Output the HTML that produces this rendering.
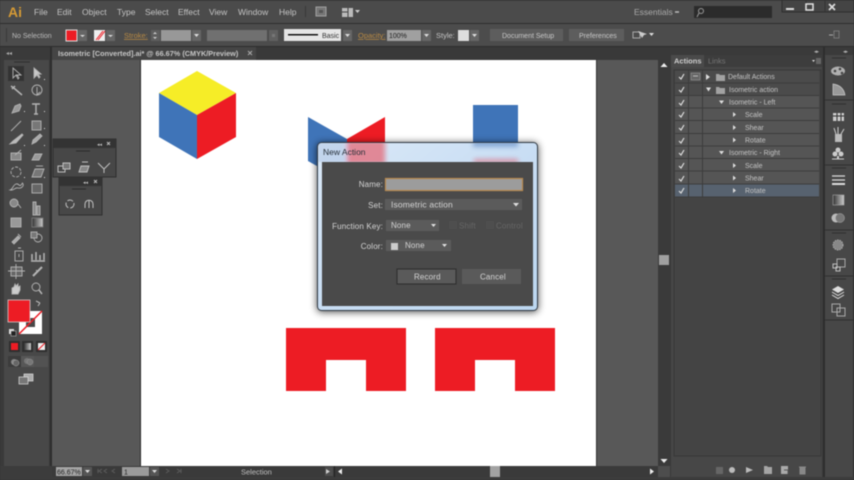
<!DOCTYPE html>
<html><head><meta charset="utf-8"><style>
html,body{margin:0;padding:0;width:854px;height:480px;overflow:hidden;background:#333}
svg{display:block;position:absolute;left:0;top:0;filter:blur(.45px)}
text{font-family:"Liberation Sans",sans-serif;font-size:8px;fill:#c8c8c8}
.m{font-size:8.5px;fill:#c4c4c4}
.d{font-size:8px;fill:#d4d4d4;letter-spacing:.15px}
.r{text-anchor:end}
.p{font-size:7px;fill:#c4c4c4}
.i{fill:none;stroke:#c0c0c0;stroke-width:1}
.f{fill:#c8c8c8}
</style></head><body>
<svg width="854" height="480" viewBox="0 0 854 480" xmlns="http://www.w3.org/2000/svg">
<defs>
<linearGradient id="glass" x1="0" y1="0" x2="1" y2="1"><stop offset="0" stop-color="#dbe9f7"/><stop offset=".5" stop-color="#c9def4"/><stop offset="1" stop-color="#bcd7f0"/></linearGradient>
<filter id="b2"><feGaussianBlur stdDeviation="2"/></filter>
<filter id="b5"><feGaussianBlur stdDeviation="4"/></filter>
<linearGradient id="grad" x1="0" x2="1"><stop offset="0" stop-color="#333"/><stop offset="1" stop-color="#ccc"/></linearGradient>
</defs>
<!-- base -->
<rect width="854" height="480" fill="#3c3c3c"/>
<rect y="1" width="854" height="22" fill="#4b4b4b"/>
<rect y="23" width="854" height="1" fill="#2e2e2e"/>
<rect y="24" width="854" height="22" fill="#4c4c4c"/>
<rect y="46" width="854" height="1" fill="#2c2c2c"/>
<rect y="47" width="854" height="13" fill="#393939"/>
<!-- menu -->
<text x="8" y="17" style="font-size:14px;font-weight:bold;fill:#d59a35">Ai</text>
<text class="m" x="34" y="15">File</text>
<text class="m" x="57" y="15">Edit</text>
<text class="m" x="82" y="15">Object</text>
<text class="m" x="117" y="15">Type</text>
<text class="m" x="145" y="15">Select</text>
<text class="m" x="178" y="15">Effect</text>
<text class="m" x="209" y="15">View</text>
<text class="m" x="238" y="15">Window</text>
<text class="m" x="279" y="15">Help</text>
<rect x="305" y="6" width="1" height="11" fill="#393939"/>
<rect x="316" y="7" width="10" height="9" fill="#777" stroke="#a0a0a0"/><rect x="319" y="10" width="4" height="3" fill="#555"/>
<rect x="342" y="8" width="11" height="9" fill="#bbb"/><path d="M348 8v9M342 12h6" stroke="#444"/><path d="M355 10h5l-2.500 3z" fill="#ccc"/>
<text class="m" x="634" y="15" style="font-size:8.500px;fill:#aaa">Essentials</text><path d="M675 12h4" stroke="#bbb" stroke-width="1.500"/>
<rect x="694" y="6" width="78" height="12" fill="#2b2b2b"/>
<circle cx="701" cy="11" r="2.500" class="i" style="stroke:#999"/><path d="M699 13l-2 4" stroke="#999"/>
<!-- window controls -->
<rect x="782" y="0" width="72" height="12" fill="#444" stroke="#2e2e2e"/><path d="M806 0v12M825 0v12" stroke="#333"/>
<rect x="786" y="8" width="8" height="2" fill="#ddd"/>
<rect x="806" y="4" width="7" height="6" fill="none" stroke="#e4e4e4" stroke-width="1.500"/>
<path d="M829 4l6 6M835 4l-6 6" stroke="#ddd" stroke-width="1.700"/>
<!-- control bar -->
<rect x="6" y="28" width="1" height="14" fill="#393939"/>
<text x="12" y="38" style="font-size:7px;fill:#bbb">No Selection</text>
<rect x="66" y="30" width="11" height="11" fill="#ed1c24" stroke="#ddd"/>
<rect x="78" y="30" width="9" height="11" fill="#666"/><path d="M80 35h5l-2.500 2z" fill="#ddd"/>
<rect x="94" y="30" width="11" height="11" fill="#eee"/><path d="M96 40l7-9M98 40l7-9" stroke="#ed1c24"/>
<rect x="106" y="30" width="9" height="11" fill="#666"/><path d="M108 35h5l-2.500 2z" fill="#ddd"/>
<text x="124" y="38" style="font-size:7.500px;fill:#b98a44;text-decoration:underline">Stroke:</text>
<rect x="151" y="30" width="9" height="11" fill="#5e5e5e"/><path d="M153 34l2-2 2 2M153 37l2 2 2-2" fill="#ccc"/>
<rect x="161" y="30" width="30" height="11" fill="#989898"/>
<rect x="192" y="30" width="9" height="11" fill="#666"/><path d="M194 34h5l-2.500 3z" fill="#ddd"/>
<rect x="207" y="30" width="60" height="11" fill="#707070"/>
<rect x="269" y="30" width="9" height="11" fill="#606060"/><rect x="272" y="34" width="3" height="3" fill="#777"/>
<rect x="284" y="29" width="57" height="12" fill="#e6e6e6"/>
<rect x="288" y="34" width="30" height="1.500" fill="#111"/>
<text x="322" y="38" style="font-size:7px;fill:#333">Basic</text>
<rect x="343" y="30" width="9" height="11" fill="#666"/><path d="M345 34h5l-2.500 3z" fill="#ddd"/>
<text x="358" y="38" style="font-size:7.500px;fill:#b98a44;text-decoration:underline">Opacity:</text>
<rect x="387" y="30" width="34" height="11" fill="#a0a0a0"/>
<text x="389" y="38" style="font-size:7px;fill:#222">100%</text>
<rect x="422" y="30" width="9" height="11" fill="#666"/><path d="M424 34h5l-2.500 3z" fill="#ddd"/>
<text x="436" y="38" style="font-size:7.500px;fill:#c4c4c4">Style:</text>
<rect x="458" y="30" width="11" height="11" fill="#ddd"/>
<rect x="470" y="30" width="9" height="11" fill="#666"/><path d="M472 34h5l-2.500 3z" fill="#ddd"/>
<rect x="490" y="29" width="73" height="12" fill="#5d5d5d"/>
<text x="502" y="38" style="font-size:7px;fill:#c8c8c8">Document Setup</text>
<rect x="569" y="29" width="55" height="12" fill="#5d5d5d"/>
<text x="579" y="38" style="font-size:7px;fill:#c8c8c8">Preferences</text>
<rect x="633" y="32" width="7" height="6" class="i" style="stroke:#aaa"/><path d="M638 31l4 7 2-3 3-1z" fill="#ccc"/><path d="M649 33h5l-2.500 3z" fill="#ddd"/>
<path d="M829 35h4" stroke="#aaa"/><rect x="834" y="31" width="5" height="7" class="i" style="stroke:#777"/>
<!-- canvas -->
<rect x="52" y="60" width="606" height="406" fill="#585858"/>
<rect x="52" y="47" width="204" height="13" fill="#454545"/>
<text x="58" y="56" style="font-size:7.300px;font-weight:bold;fill:#c6c6c6">Isometric [Converted].ai* @ 66.67% (CMYK/Preview)</text>
<path d="M248 51l4 4M252 51l-4 4" stroke="#aaa"/>
<rect x="140" y="60" width="1" height="406" fill="#2a2a2a"/>
<rect x="141" y="60" width="455" height="406" fill="#fff"/>
<rect x="596" y="60" width="1" height="406" fill="#333"/>
<!-- artwork -->
<path d="M197 71L236 93L197 115L159 93Z" fill="#f6ed27"/>
<path d="M159 93L197 115V159L159 137Z" fill="#3f74b8"/>
<path d="M236 93L197 115V159L236 137Z" fill="#ed1c24"/>
<path d="M308 117L347 139V183L308 161Z" fill="#3f74b8"/>
<path d="M385 117L347 139V183L385 161Z" fill="#ed1c24"/>
<rect x="473" y="105" width="45" height="45" fill="#3f74b8"/>
<path d="M286 328H406V391H366V360H326V391H286Z" fill="#ed1c24"/>
<path d="M435 328H555V391H515V360H475V391H435Z" fill="#ed1c24"/>
<!-- left toolbar -->
<rect x="0" y="47" width="52" height="419" fill="#3a3a3a"/>
<rect x="4" y="60" width="45" height="406" fill="#484848"/>
<rect x="50" y="47" width="2" height="419" fill="#2e2e2e"/>
<text x="6" y="55" style="font-size:6px;fill:#aaa">◂◂</text>
<path d="M14 62h16" stroke="#2f2f2f"/>
<rect x="8" y="66" width="16" height="15" fill="#333"/>
<g stroke="#b4b4b4" fill="none" stroke-width=".9">
<path d="M13 68v10l3-3 2 4 1-1-2-3h4z"/>
<path d="M34 68v10l3-3 2 3 1-1-2-3h3z" fill="#c8c8c8"/>
<path d="M11 86l4 3 7 6M12 89l3-3" stroke-width="1.500"/>
<circle cx="37" cy="90" r="5"/><path d="M37 87v8l3-3"/>
<path d="M12 113l3-7 5-2 1 2-2 5-7 2z" fill="#999"/>
<path d="M32 104h8M36 104v10M34 114h4" stroke-width="1.400"/>
<path d="M11 131l10-10"/>
<rect x="32" y="121" width="9" height="9" fill="#777"/>
<path d="M10 144l3-3 9-7 1 1-7 8z" fill="#bbb"/>
<path d="M32 144l1-4 7-6 2 2-6 6z" fill="#aaa"/>
<rect x="11" y="153" width="10" height="7" fill="#888"/><path d="M15 155l6-5"/>
<path d="M32 160l3-6h7l-3 6z" fill="#999"/>
<circle cx="16" cy="172" r="5" stroke-dasharray="3 1.500"/>
<path d="M32 177l3-8h9l-3 8z" fill="#777"/><path d="M36 166h7"/>
<path d="M10 190c3-1 3-5 6-6s3 3 5 1 1-3 2-1-2 5-5 4-4 3-8 2z"/>
<rect x="32" y="184" width="10" height="9" fill="#666"/>
<circle cx="14" cy="203" r="4" fill="#888"/><path d="M18 204l3 4"/>
<path d="M33 215v-13h3v13zM37 215v-9h3v9z" fill="#888"/>
<rect x="11" y="218" width="10" height="9" fill="#999"/>
<rect x="32" y="218" width="11" height="9" fill="url(#grad)" stroke="#777"/>
<path d="M12 242l6-6 2 2-6 6z" fill="#aaa"/><path d="M18 234l3 3"/>
<circle cx="38" cy="238" r="4"/><rect x="31" y="232" width="6" height="6" fill="#777"/>
<rect x="15" y="251" width="8" height="10"/><path d="M18 248h3M19 254v3"/>
<path d="M32 260v-6M36 260v-8M40 260v-5M44 260v-7M31 261h14" stroke-width="1.500"/>
<rect x="11" y="267" width="11" height="9" fill="#666"/><path d="M16 264v15M8 271h17"/>
<path d="M33 276l9-9" stroke-width="2"/><path d="M36 270l2 2"/>
<path d="M12 294v-6l2-1 1-3 1 2 2-2v3l2-1v4l-2 4z" fill="#ccc"/>
<circle cx="36" cy="287" r="4"/><path d="M39 290l3 4" stroke-width="1.500"/>
</g>
<g fill="#ddd"><rect x="24" y="111" width="1" height="1"/><rect x="44" y="111" width="1" height="1"/><rect x="44" y="128" width="1" height="1"/><rect x="24" y="145" width="1" height="1"/><rect x="44" y="145" width="1" height="1"/><rect x="24" y="177" width="1" height="1"/><rect x="44" y="177" width="1" height="1"/><rect x="44" y="79" width="1" height="1"/></g>
<!-- fill/stroke -->
<rect x="19" y="311" width="23" height="23" fill="#fff"/>
<rect x="26" y="318" width="9" height="9" fill="#484848"/>
<path d="M19 334L42 311" stroke="#ed1c24" stroke-width="1.500"/>
<rect x="8" y="300" width="22" height="22" fill="#ed1c24" stroke="#ddd" stroke-width=".7"/>
<path d="M36 301l4 2M40 303l-2 3" stroke="#bbb" fill="none"/>
<rect x="9" y="329" width="5" height="5" fill="#ddd"/><rect x="11" y="331" width="5" height="5" fill="#222" stroke="#ccc" stroke-width=".5"/>
<rect x="9" y="341" width="11" height="11" fill="#2e2e2e"/><rect x="11" y="343" width="7" height="7" fill="#ed1c24"/>
<rect x="22" y="341" width="11" height="11" fill="#2e2e2e"/><rect x="24" y="343" width="7" height="7" fill="url(#grad)"/>
<rect x="36" y="341" width="11" height="11" fill="#2e2e2e"/><rect x="38" y="343" width="7" height="7" fill="#eee"/><path d="M38 350l7-7" stroke="#ed1c24"/>
<rect x="8" y="356" width="40" height="11" fill="#575757"/><rect x="8" y="356" width="13" height="11" fill="#3c3c3c"/><rect x="34" y="356" width="14" height="11" fill="#525252"/>
<circle cx="14" cy="362" r="3" fill="#888"/><circle cx="16" cy="363" r="3" fill="#666" stroke="#aaa" stroke-width=".5"/>
<circle cx="27" cy="361" r="3" fill="#777"/><circle cx="30" cy="362" r="3" fill="#777" stroke="#999" stroke-width=".5"/>
<rect x="24" y="374" width="9" height="7" fill="#aaa" stroke="#ddd" stroke-width=".7"/><rect x="19" y="377" width="9" height="7" fill="#777" stroke="#ddd" stroke-width=".7"/>
<!-- floating panels -->
<rect x="53" y="139" width="63" height="38" fill="#474747" stroke="#2e2e2e"/>
<rect x="53" y="139" width="63" height="9" fill="#333"/>
<text x="97" y="146" style="font-size:5px;fill:#bbb">◂◂</text><path d="M107 142l3 3M110 142l-3 3" stroke="#bbb"/>
<path d="M76 151h14" stroke="#2c2c2c"/>
<g class="i" stroke-width=".8"><rect x="58" y="166" width="7" height="6"/><rect x="63" y="163" width="7" height="6" fill="#777"/><path d="M79 172l2-6h8l-2 6z" fill="#888"/><path d="M82 162h6"/><path d="M98 163l6 6 6-6M104 169v4"/></g>
<rect x="59" y="177" width="43" height="38" fill="#474747" stroke="#2e2e2e"/>
<rect x="59" y="177" width="43" height="9" fill="#333"/>
<text x="83" y="184" style="font-size:5px;fill:#bbb">◂◂</text><path d="M94 180l3 3M97 180l-3 3" stroke="#bbb"/>
<path d="M72 189h14" stroke="#2c2c2c"/>
<circle cx="70" cy="204" r="4" class="i" stroke-dasharray="6 2"/><path d="M85 208v-4c0-5 8-5 8 0v4" class="i"/><path d="M89 200v8" class="i"/>
<!-- status bar -->
<rect x="52" y="466" width="606" height="11" fill="#3a3a3a"/>
<rect x="56" y="467" width="26" height="9" fill="#a5a5a5"/>
<text x="57" y="474.500" style="font-size:7px;fill:#222">66.67%</text>
<rect x="83" y="467" width="9" height="9" fill="#555"/><path d="M85 470h5l-2.500 3z" fill="#ddd"/>
<path d="M98 469v4M102 469l-3 2 3 2M107 469l-3 2 3 2M115 469l-3 2 3 2" stroke="#5c5c5c" fill="none"/>
<rect x="122" y="467" width="27" height="9" fill="#9b9b9b"/>
<text x="124" y="474.500" style="font-size:7px;fill:#222">1</text>
<rect x="150" y="467" width="9" height="9" fill="#555"/><path d="M152 470h5l-2.500 3z" fill="#ddd"/>
<path d="M166 469l3 2-3 2M177 469l3 2-3 2M181 469v4" stroke="#5c5c5c" fill="none"/>
<text x="241" y="474.500" style="font-size:7.500px;fill:#c0c0c0">Selection</text>
<rect x="325" y="467" width="8" height="9" fill="#4d4d4d"/><path d="M326 469l4 2.500-4 2.500z" fill="#ccc"/>
<rect x="334" y="466" width="1" height="11" fill="#222"/>
<path d="M342 468.500l-4 3 4 3z" fill="#eee"/>
<rect x="490" y="466" width="10" height="11" fill="#a2a2a2"/>
<path d="M650 468.500l4 3-4 3z" fill="#eee"/>
<rect x="658" y="466" width="12" height="11" fill="#4d4d4d"/>
<!-- v scrollbar -->
<rect x="658" y="60" width="12" height="406" fill="#3a3a3a"/>
<path d="M664 63l-3.500 4h7z" fill="#eee"/>
<rect x="659" y="255" width="10" height="10" fill="#a0a0a0"/>
<path d="M664 463l-3.500-4h7z" fill="#eee"/>
<!-- right panels -->
<rect x="670" y="47" width="184" height="430" fill="#3a3a3a"/>
<rect x="671" y="55" width="151" height="422" fill="#474747"/>
<rect x="671" y="55" width="151" height="12" fill="#3d3d3d"/>
<rect x="671" y="55" width="33" height="12" fill="#4a4a4a"/>
<text x="674" y="63.500" style="font-size:7.500px;font-weight:bold;fill:#cfcfcf">Actions</text>
<text x="708" y="63.500" style="font-size:7.500px;fill:#777">Links</text>
<path d="M812 60h3l-1.500 2z" fill="#ddd"/><rect x="816" y="58" width="5" height="6" fill="#666"/>
<text x="814" y="53" style="font-size:5px;fill:#aaa">◂▸</text><text x="843" y="53" style="font-size:5px;fill:#aaa">◂▸</text>
<rect x="674" y="70" width="147" height="386" fill="#444" stroke="#383838"/>
<!-- rows -->
<rect x="675" y="70.500" width="144" height="12.500" fill="#4b4b4b"/>
<rect x="675" y="83" width="144" height="12.500" fill="#4b4b4b"/>
<g fill="#555"><rect x="675" y="96" width="144" height="12"/><rect x="675" y="108.500" width="144" height="12"/><rect x="675" y="121" width="144" height="12"/><rect x="675" y="134" width="144" height="12"/><rect x="675" y="146.500" width="144" height="12"/><rect x="675" y="159" width="144" height="12"/><rect x="675" y="171.500" width="144" height="12"/></g>
<rect x="675" y="184" width="144" height="13" fill="#57626f"/>
<path d="M675 83h144M675 95.500h144M675 108h144M675 120.500h144M675 133.500h144M675 146h144M675 158.500h144M675 171h144M675 184h144M675 197h144" stroke="#3c3c3c"/>
<path d="M688.500 70v127M702.500 70v127" stroke="#3c3c3c"/>
<g fill="none" stroke="#dedede" stroke-width="1.200">
<path d="M679 77l2 2 3-5M679 90l2 2 3-5M679 103l2 2 3-5M679 115l2 2 3-5M679 128l2 2 3-5M679 141l2 2 3-5M679 153l2 2 3-5M679 166l2 2 3-5M679 179l2 2 3-5M679 191l2 2 3-5"/>
</g>
<rect x="691" y="73" width="9" height="7" fill="#666" stroke="#999" stroke-width=".6"/><path d="M693 76h5" stroke="#bbb"/>
<g fill="#ddd">
<path d="M706 74l4 3-4 3z"/><path d="M706 87.500h5l-2.500 4z"/>
<path d="M719 100.500h5l-2.500 3.500z"/><path d="M719 151h5l-2.500 3.500z"/>
<path d="M733 112l3 2.500-3 2.500zM733 125l3 2.500-3 2.500zM733 137.500l3 2.500-3 2.500zM733 163l3 2.500-3 2.500zM733 175.500l3 2.500-3 2.500zM733 188l3 2.500-3 2.500z"/>
</g>
<g fill="#a2a2a2"><path d="M716 74h3l1 1h5v6h-9z"/><path d="M716 87h3l1 1h5v6h-9z"/></g>
<g style="font-size:7px">
<text class="p" x="728" y="79">Default Actions</text>
<text class="p" x="729" y="92">Isometric action</text>
<text class="p" x="729" y="104.500">Isometric - Left</text>
<text class="p" x="745" y="117">Scale</text>
<text class="p" x="745" y="130">Shear</text>
<text class="p" x="745" y="142.500">Rotate</text>
<text class="p" x="729" y="155">Isometric - Right</text>
<text class="p" x="745" y="168">Scale</text>
<text class="p" x="745" y="180.500">Shear</text>
<text class="p" x="745" y="193">Rotate</text>
</g>
<!-- panel bottom icons -->
<rect x="716" y="467" width="7" height="7" fill="#666"/>
<circle cx="732" cy="470" r="3" fill="#bbb"/>
<path d="M746 467l7 3-7 3z" fill="#bbb"/>
<path d="M764 466h3l1 1h4v7h-8z" fill="#a5a5a5"/>
<rect x="781" y="466" width="7" height="8" fill="#aaa"/><path d="M784 470h4v4" stroke="#555" fill="none"/>
<path d="M799 467h7M800 468h5v6h-5z" fill="#888" stroke="#888"/>
<!-- dock -->
<rect x="823" y="47" width="2" height="430" fill="#2e2e2e"/>
<rect x="825" y="55" width="28" height="422" fill="#474747"/>
<rect x="853" y="47" width="1" height="430" fill="#333"/>
<path d="M832 58h14M825 100h28M832 104h14M825 165h28M832 168h14M825 230h28M832 233h14M825 276h28M832 279h14M825 320h28" stroke="#2f2f2f"/>
<ellipse cx="838" cy="71" rx="7" ry="4.500" fill="#b0b0b0"/><circle cx="835" cy="71" r="1.300" fill="#444"/><circle cx="840" cy="69" r="1.300" fill="#444"/><circle cx="842" cy="73" r="1.300" fill="#444"/>
<path d="M833 84c7 1 11 5 12 11h-12z" fill="#999" stroke="#ccc" stroke-width=".7"/>
<rect x="833" y="113" width="11" height="8" fill="#ccc"/><path d="M833 116h11M837 113v8M841 113v8" stroke="#333"/>
<rect x="835" y="134" width="7" height="8" fill="#bbb"/><path d="M836 134l-2-6M838 134v-7M841 134l3-5" stroke="#ccc"/>
<circle cx="835" cy="154" r="2.500" fill="#ccc"/><circle cx="841" cy="154" r="2.500" fill="#ccc"/><circle cx="838" cy="150" r="2.500" fill="#ccc"/><path d="M837 156h2v3h-2z" fill="#ccc"/><path d="M832 159h12" stroke="#ccc"/>
<path d="M832 176h13M832 180h13" stroke="#ddd" stroke-width="1.200"/><path d="M832 184h13" stroke="#ddd" stroke-width="2"/>
<rect x="833" y="195" width="11" height="10" fill="url(#grad)" stroke="#aaa" stroke-width=".6"/>
<circle cx="836" cy="218" r="4.500" fill="#bbb"/><circle cx="840" cy="218" r="4.500" fill="#777" stroke="#aaa" stroke-width=".5"/>
<circle cx="838" cy="245" r="5" fill="#888" stroke="#aaa" stroke-dasharray="1.500 1"/>
<rect x="837" y="259" width="8" height="8" class="i" style="stroke:#aaa"/><rect x="833" y="264" width="4" height="4" class="i"/><rect x="836" y="267" width="4" height="4" class="i"/>
<path d="M838 286l6 3.500-6 3.500-6-3.500z" fill="#ddd"/><path d="M832 292l6 3.500 6-3.500" stroke="#ddd" fill="none"/><path d="M832 295l6 3.500 6-3.500" stroke="#ddd" fill="none"/>
<rect x="832" y="304" width="8" height="8" class="i" style="stroke:#aaa"/><rect x="837" y="308" width="8" height="8" class="i" style="stroke:#aaa"/>
<!-- dialog -->
<rect x="317" y="143" width="221" height="169" rx="4" fill="#000" filter="url(#b5)" opacity=".7"/>
<rect x="317.500" y="142.500" width="220" height="168" rx="4" fill="url(#glass)" stroke="#303a44"/>
<svg x="318" y="143" width="219" height="19"><g filter="url(#b2)">
<path d="M-10 -26L29 -4V30L-10 30Z" fill="#3f74b8" opacity=".15"/>
<path d="M29 -4L67 -26V30H29Z" fill="#ed1c24" opacity=".45"/>
<rect x="155" y="-6" width="45" height="10" fill="#3f74b8" opacity=".5"/>
<rect x="156" y="16" width="44" height="8" fill="#ed1c24" opacity=".35"/></g></svg>
<rect x="322" y="162" width="211" height="144" fill="#4a4a4a"/>
<text x="323" y="155" style="font-size:8.500px;fill:#28313a">New Action</text>
<text class="d r" x="383" y="187">Name:</text>
<text class="d r" x="383" y="208">Set:</text>
<text class="d r" x="383" y="229">Function Key:</text>
<text class="d r" x="383" y="249">Color:</text>
<rect x="385.500" y="178.500" width="137" height="12" fill="#9c9c9c" stroke="#b88a4f" stroke-width="1.200"/>
<rect x="385" y="199" width="137" height="11" fill="#5b5b5b"/>
<text class="d" x="391" y="207.500" style="font-size:8.500px">Isometric action</text>
<path d="M513 203h6l-3 3.500z" fill="#e0e0e0"/>
<rect x="386" y="220" width="53" height="11" fill="#5b5b5b"/>
<text class="d" x="391" y="228">None</text>
<path d="M431 224h5l-2.500 3z" fill="#e0e0e0"/>
<rect x="449" y="221" width="8" height="8" fill="#4e4e4e"/>
<text class="d" x="459" y="228.500" style="fill:#666">Shift</text>
<rect x="486" y="221" width="8" height="8" fill="#4e4e4e"/>
<text class="d" x="496" y="228.500" style="fill:#666">Control</text>
<rect x="386" y="240" width="65" height="11" fill="#5b5b5b"/>
<rect x="391" y="243" width="7" height="7" fill="#ccc"/>
<text class="d" x="405" y="248">None</text>
<path d="M442 244h5l-2.500 3z" fill="#e0e0e0"/>
<rect x="397" y="269" width="59" height="15" fill="#5a5a5a" stroke="#2c2c2c" stroke-width="1"/>
<text class="d" x="414" y="279.500">Record</text>
<rect x="462" y="269" width="59" height="15" fill="#5a5a5a"/>
<text class="d" x="480" y="279.500">Cancel</text>
</svg>
</body></html>
